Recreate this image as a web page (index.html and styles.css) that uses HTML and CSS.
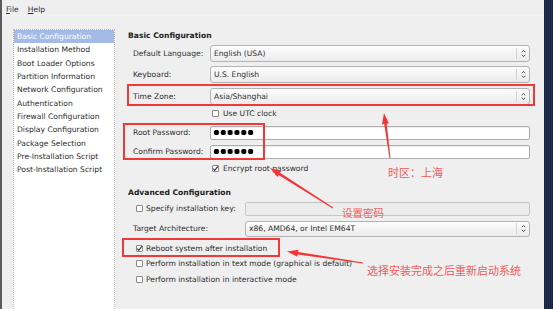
FILE: index.html
```html
<!DOCTYPE html>
<html>
<head>
  <meta charset="UTF-8">
  <title>Kickstart Configurator</title>
  <link rel="stylesheet" href="styles.css">
</head>
<body>
  <div class="desktop">
    <div class="window">
      <div class="menubar">
        <span class="menu"><u>F</u>ile</span>
        <span class="menu"><u>H</u>elp</span>
      </div>
      <div class="workspace">
        <!-- Section list on the left -->
        <ul class="nav">
          <li class="selected">Basic Configuration</li>
          <li>Installation Method</li>
          <li>Boot Loader Options</li>
          <li>Partition Information</li>
          <li>Network Configuration</li>
          <li>Authentication</li>
          <li>Firewall Configuration</li>
          <li>Display Configuration</li>
          <li>Package Selection</li>
          <li>Pre-Installation Script</li>
          <li>Post-Installation Script</li>
        </ul>

        <div class="panel">
          <h2 class="section-title">Basic Configuration</h2>
          <div class="row combo-row r-lang">
            <span class="label">Default Language:</span>
            <div class="combo">English (USA)<span class="combo-btn"><svg width="5" height="9" viewBox="0 0 5 9"><path d="M0.8 3.3 L2.5 1.4 L4.2 3.3 M0.8 5.7 L2.5 7.6 L4.2 5.7" fill="none" stroke="#444" stroke-width="0.9"/></svg></span></div>
          </div>
          <div class="row combo-row r-kbd">
            <span class="label">Keyboard:</span>
            <div class="combo">U.S. English<span class="combo-btn"><svg width="5" height="9" viewBox="0 0 5 9"><path d="M0.8 3.3 L2.5 1.4 L4.2 3.3 M0.8 5.7 L2.5 7.6 L4.2 5.7" fill="none" stroke="#444" stroke-width="0.9"/></svg></span></div>
          </div>
          <div class="row combo-row r-tz">
            <span class="label">Time Zone:</span>
            <div class="combo">Asia/Shanghai<span class="combo-btn"><svg width="5" height="9" viewBox="0 0 5 9"><path d="M0.8 3.3 L2.5 1.4 L4.2 3.3 M0.8 5.7 L2.5 7.6 L4.2 5.7" fill="none" stroke="#444" stroke-width="0.9"/></svg></span></div>
          </div>
          <div class="row check-row r-utc">
            <span class="check"></span>Use UTC clock
          </div>
          <div class="row entry-row r-root">
            <span class="label">Root Password:</span>
            <div class="entry"><span class="dots"></span></div>
          </div>
          <div class="row entry-row r-confirm">
            <span class="label">Confirm Password:</span>
            <div class="entry"><span class="dots"></span></div>
          </div>
          <div class="row check-row r-encrypt">
            <span class="check checked"><svg width="7" height="7" viewBox="0 0 7 7"><path d="M1.3 3.6 L2.8 5.3 L5.8 1.4" fill="none" stroke="#333" stroke-width="1.1"/></svg></span>Encrypt root password
          </div>

          <h2 class="section-title r-adv">Advanced Configuration</h2>
          <div class="row entry-row adv r-key">
            <span class="label adv-check"><span class="check"></span>Specify installation key:</span>
            <div class="entry disabled wide"></div>
          </div>
          <div class="row adv r-arch">
            <span class="label">Target Architecture:</span>
            <div class="combo wide">x86, AMD64, or Intel EM64T<span class="combo-btn"><svg width="5" height="9" viewBox="0 0 5 9"><path d="M0.8 3.3 L2.5 1.4 L4.2 3.3 M0.8 5.7 L2.5 7.6 L4.2 5.7" fill="none" stroke="#444" stroke-width="0.9"/></svg></span></div>
          </div>
          <div class="row adv-row r-reboot">
            <span class="check checked"><svg width="7" height="7" viewBox="0 0 7 7"><path d="M1.3 3.6 L2.8 5.3 L5.8 1.4" fill="none" stroke="#333" stroke-width="1.1"/></svg></span>Reboot system after installation
          </div>
          <div class="row adv-row r-text">
            <span class="check"></span>Perform installation in text mode (graphical is default)
          </div>
          <div class="row adv-row r-inter">
            <span class="check"></span>Perform installation in interactive mode
          </div>
        </div>
      </div>
    </div>

    <!-- red annotations drawn over the screenshot -->
    <svg class="marks" width="553" height="309" viewBox="0 0 553 309">
      <g fill="none" stroke="#f03a3a" stroke-width="2">
        <rect x="128" y="85" width="406" height="20"/>
        <rect x="124" y="124" width="140" height="35"/>
        <rect x="123" y="239" width="156" height="17"/>
      </g>
      <g fill="#f53535">
        <polygon points="390.5,157.9 386.7,123.7 388.9,123.4 384,113 382,124.4 384.2,124.1 389.5,158.1"/>
        <polygon points="333.3,207.6 280.0,172.8 281.2,170.9 270,168 277.4,176.9 278.6,175.0 332.7,208.4"/>
        <polygon points="363.1,262.5 298.1,251.9 298.4,249.7 287,251.5 297.4,256.7 297.7,254.5 362.9,263.5"/>
      </g>
    </svg>
    <div class="note note-tz">时区：上海</div>
    <div class="note note-pw">设置密码</div>
    <div class="note note-reboot">选择安装完成之后重新启动系统</div>
  </div>
</body>
</html>
```

FILE: styles.css
```css
/* Base */
html, body {
  margin: 0;
  padding: 0;
}
body {
  background: #1b2744;
  font-family: "DejaVu Sans", sans-serif;
  font-size: 7.6px;
  color: #2e2e2e;
}
.desktop {
  position: relative;
  width: 553px;
  height: 309px;
  overflow: hidden;
  background: repeating-linear-gradient(90deg, #18223d 0, #18223d 1px, #22305a 1px, #22305a 2px);
}
.window {
  width: 542px;
  height: 309px;
  background: #efefef;
  border-left: 2px solid #5a5a5a;
  display: flex;
  flex-direction: column;
  overflow: hidden;
}
/* Menu bar */
.menubar {
  flex-shrink: 0;
  height: 16px;
  display: flex;
  align-items: center;
  gap: 9px;
  padding: 5px 0 0 4px;
  box-sizing: border-box;
  border-bottom: 1px solid #f6f0f0;
  line-height: 10px;
}
.menu u {
  text-decoration: underline;
  text-underline-offset: 1px;
}
.workspace {
  flex: 1;
  min-height: 0;
  display: flex;
  align-items: flex-start;
}
/* Section list */
.nav {
  flex-shrink: 0;
  list-style: none;
  margin: 13px 0 0 11px;
  padding: 0;
  width: 102px;
  height: 300px;
  box-sizing: border-box;
  background: #fff;
  border: 1px dotted #b8b8b8;
}
.nav li {
  height: 13.35px;
  line-height: 13.35px;
  padding-left: 3px;
  white-space: nowrap;
}
.nav li.selected {
  background: #a3bbe6;
  color: #fff;
}
/* Right panel */
.panel {
  padding: 14px 0 0 13px;
  display: flex;
  flex-direction: column;
}
.section-title {
  margin: 0;
  height: 12px;
  line-height: 12px;
  font-size: 7.6px;
  font-weight: bold;
  color: #222;
}
.row {
  display: flex;
  align-items: center;
  white-space: nowrap;
  flex-shrink: 0;
}
.label {
  width: 82px;
  padding-left: 5px;
  box-sizing: border-box;
  flex-shrink: 0;
}
.adv .label {
  width: 117px;
}
.adv-check {
  display: flex;
  align-items: center;
  padding-left: 8px;
}
.combo-row { height: 17px; }
.r-lang { margin-top: 3px; }
.r-kbd { margin-top: 4.3px; }
.r-tz { margin-top: 4.4px; }
.check-row {
  height: 12px;
  padding-left: 84px;
}
.r-utc { margin-top: 3.3px; }
.entry-row { height: 14px; }
.r-root { margin-top: 6px; }
.r-confirm { margin-top: 5px; }
.r-encrypt { margin-top: 4px; }
.r-adv { margin-top: 12px; }
.r-key { margin-top: 3px; }
.r-arch { height: 16px; margin-top: 5px; }
.adv-row {
  height: 12px;
  padding-left: 8px;
}
.r-reboot { margin-top: 6px; }
.r-text { margin-top: 3px; }
.r-inter { margin-top: 4px; }

/* Widgets */
.combo {
  position: relative;
  width: 320px;
  height: 100%;
  box-sizing: border-box;
  border: 1px solid #b3b3b3;
  border-radius: 3px;
  background: linear-gradient(#fdfdfd, #ebebeb);
  padding-left: 3px;
  display: flex;
  align-items: center;
}
.combo.wide {
  width: 285px;
}
.combo-btn {
  margin-left: auto;
  width: 12px;
  height: 11px;
  border-left: 1px solid #d2d2d2;
  display: flex;
  align-items: center;
  justify-content: center;
}
.entry {
  width: 320px;
  height: 100%;
  box-sizing: border-box;
  border: 1px solid #adadad;
  border-radius: 2px;
  background: #fff;
  box-shadow: inset 0 1px 1px rgba(0,0,0,0.08);
  display: flex;
  align-items: center;
  padding-left: 2px;
}
.entry.wide {
  width: 285px;
}
.entry.disabled {
  background: #ececec;
  border-color: #c6c6c6;
  box-shadow: none;
}
.dots {
  width: 41px;
  height: 7px;
  background: radial-gradient(circle, #000 2.5px, transparent 3px) 0 0 / 6.85px 7px repeat-x;
}
.check {
  width: 7px;
  height: 7px;
  box-sizing: border-box;
  border: 1px solid #8c8c8c;
  border-radius: 1px;
  background: #fff;
  margin-right: 4px;
  flex-shrink: 0;
  display: flex;
}
.check svg {
  margin: -1px;
}
.adv-row .check,
.adv-check .check {
  margin-right: 3px;
}

/* Annotations */
.marks {
  position: absolute;
  left: 0;
  top: 0;
  pointer-events: none;
}
.note {
  position: absolute;
  font-family: "Noto Sans CJK SC", sans-serif;
  font-size: 11px;
  line-height: 12px;
  color: #f35a5a;
  white-space: nowrap;
}
.note-tz {
  left: 388px;
  top: 166px;
}
.note-pw {
  left: 342px;
  top: 207px;
  font-size: 10.5px;
}
.note-reboot {
  left: 367px;
  top: 264px;
}
```
